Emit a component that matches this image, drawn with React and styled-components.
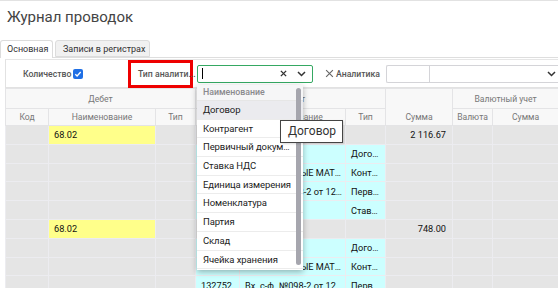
import React from 'react';
import styled, { createGlobalStyle } from 'styled-components';

const GlobalStyle = createGlobalStyle`
    body {
        margin: 0;
        background: #ffffff;
        font-family: Roboto, "Open Sans", sans-serif;
        color: #222;
    }
`

const Page = styled.div`
    position: relative;
    width: 558px;
    height: 288px;
    overflow: hidden;
    background: #fff;
`

const TitleBar = styled.div`
    height: 39px;
    border-top: 1px solid #e2e2e2;
    padding: 7px 7px 0;
    box-sizing: border-box;
    font-size: 15px;
    line-height: 18px;
    color: #444;
`

const TabStrip = styled.div`
    display: flex;
    align-items: flex-end;
    height: 18px;
    border-bottom: 1px solid #dedede;
`

const Tab = styled.div`
    width: ${p => p.$w}px;
    height: ${p => p.$active ? '18px' : '17px'};
    margin-bottom: ${p => p.$active ? '-1px' : '0'};
    margin-left: ${p => p.$active ? '0' : '2px'};
    padding: 0 ${p => p.$active ? '6px' : '7px'};
    box-sizing: border-box;
    border: 1px solid #dcdcdc;
    border-bottom: ${p => p.$active ? 'none' : '1px solid #dcdcdc'};
    border-radius: 3px 3px 0 0;
    background: ${p => p.$active ? '#fff' : '#f1f1f1'};
    font-size: 9px;
    line-height: 17px;
    color: #333;
    white-space: nowrap;
`

const Toolbar = styled.div`
    display: flex;
    align-items: center;
    height: 29px;
    margin: 1px 0 0 5px;
    box-sizing: border-box;
    border-top: 1px solid #e6e6e6;
    border-left: 1px solid #e2e2e2;
    border-bottom: 1px solid #e2e2e2;
`

const FieldLabel = styled.span`
    font-size: 8.7px;
    font-weight: 500;
    color: #555;
    white-space: nowrap;
`

const QtyLabel = styled(FieldLabel)`
    flex-shrink: 0;
    width: 48px;
    margin-left: 17px;
`

const CheckBox = styled.span`
    display: inline-flex;
    align-items: center;
    justify-content: center;
    flex-shrink: 0;
    width: 10px;
    height: 10px;
    margin-left: 2px;
    border-radius: 2px;
    background: #1f6fe5;
`

const Highlight = styled.div`
    display: flex;
    align-items: center;
    flex-shrink: 0;
    width: 65px;
    height: 28px;
    margin-left: 45px;
    padding-left: 7px;
    box-sizing: border-box;
    border: 3px solid #ee0000;
`

const SelectBox = styled.div`
    display: flex;
    align-items: center;
    flex-shrink: 0;
    width: 116px;
    height: 18px;
    margin-left: 4px;
    padding: 0 6px 0 4px;
    box-sizing: border-box;
    border: 1px solid #35a862;
    border-radius: 2px;
    background: #fff;
`

const Caret = styled.span`
    width: 1px;
    height: 11px;
    background: #000;
`

const Spacer = styled.span`
    flex: 1;
`

const ClearBtn = styled.div`
    display: flex;
    align-items: center;
    flex-shrink: 0;
    gap: 2px;
    margin-left: 12px;
    svg { flex-shrink: 0; }
`

const AnalyticsInput = styled.div`
    display: flex;
    align-items: center;
    flex: 1;
    height: 18px;
    margin-left: 6px;
    box-sizing: border-box;
    border: 1px solid #d4d4d8;
    border-right: none;
    border-radius: 2px 0 0 2px;
`

const InputPart = styled.div`
    width: 42px;
    height: 100%;
    border-right: 1px solid #d4d4d8;
`

const Grid = styled.table`
    margin-left: 5px;
    border-collapse: collapse;
    table-layout: fixed;
    width: 553px;
`

const HeadCell = styled.th`
    height: ${p => p.$h || 19}px;
    padding: 0 3px;
    border: 1px solid #e4e4e6;
    background: #f8f8f8;
    color: #777;
    font-size: 8.6px;
    font-weight: 400;
    text-align: center;
    vertical-align: ${p => p.$bottom ? 'bottom' : 'middle'};
    padding-bottom: ${p => p.$bottom ? '3px' : '0'};
    white-space: nowrap;
    overflow: hidden;
`

const bgFor = {
    gray: '#e5e5e5',
    yellow: '#ffff8a',
    cyan: '#ccffff',
}

const Cell = styled.td`
    height: 18.8px;
    padding: 0 ${p => p.$right ? '6px' : '3px'} 0 5px;
    box-sizing: border-box;
    border: 1px solid #ececf0;
    background: ${p => bgFor[p.$tone || 'gray']};
    color: #111;
    font-size: 9.2px;
    text-align: ${p => p.$right ? 'right' : 'left'};
    white-space: nowrap;
    overflow: hidden;
    text-overflow: ellipsis;
`

const Dropdown = styled.div`
    position: absolute;
    left: 197px;
    top: 85px;
    width: 106px;
    height: 185px;
    background: #fff;
    box-shadow: 0 2px 6px rgba(0, 0, 0, 0.3);
    overflow: hidden;
`

const DropHead = styled.div`
    height: 15px;
    padding-left: 6px;
    background: #f6f6f7;
    color: #8a8a8e;
    font-size: 8.8px;
    font-weight: 500;
    line-height: 15px;
    border-bottom: 1px solid #e6e6e6;
`

const DropItem = styled.div`
    height: 18.7px;
    padding: 0 10px 0 6px;
    box-sizing: border-box;
    border-bottom: 1px solid #ececec;
    background: ${p => p.$active ? '#ebebef' : '#fff'};
    font-size: 9.5px;
    letter-spacing: -0.1px;
    line-height: 18px;
    color: #222;
    white-space: nowrap;
    overflow: hidden;
    text-overflow: ellipsis;
`

const ScrollThumb = styled.div`
    position: absolute;
    right: 2px;
    top: 3px;
    width: 5px;
    height: 177px;
    border-radius: 3px;
    background: #a6a6ae;
`

const Tooltip = styled.div`
    position: absolute;
    left: 280px;
    top: 120px;
    width: 63px;
    height: 23px;
    box-sizing: border-box;
    padding-left: 7px;
    border: 1px solid #444;
    background: #fff;
    font-size: 12px;
    line-height: 21px;
    color: #333;
    box-shadow: 1px 1px 2px rgba(0, 0, 0, 0.15);
`

const Chevron = () => (
    <svg width="9" height="6" viewBox="0 0 9 6">
        <path d="M1 1l3.5 3.5L8 1" fill="none" stroke="#333" strokeWidth="1.5" />
    </svg>
)

const Cross = ({color = '#333', size = 7, w = 1.6}) => (
    <svg width={size} height={size} viewBox="0 0 8 8">
        <path d="M1 1l6 6M7 1l-6 6" fill="none" stroke={color} strokeWidth={w} />
    </svg>
)

const rows = [
    {dName: '68.02', sum: '2 116.67'},
    {cType: 'Договор'},
    {cName: 'ООО ТОРГОВЫЕ МАТЕРИАЛЫ', cType: 'Контрагент'},
    {cCode: '132752', cName: 'Вх. с-ф. №098-2 от 12.01.2023', cType: 'Первичный документ'},
    {cType: 'Ставка НДС'},
    {dName: '68.02', sum: '748.00'},
    {cType: 'Договор'},
    {cName: 'ООО ТОРГОВЫЕ МАТЕРИАЛЫ', cType: 'Контрагент'},
    {cCode: '132752', cName: 'Вх. с-ф. №098-2 от 12.01.2023', cType: 'Первичный документ'},
]

const items = ['Договор', 'Контрагент', 'Первичный документ', 'Ставка НДС', 'Единица измерения',
    'Номенклатура', 'Партия', 'Склад', 'Ячейка хранения']

const App = () => {
    return (<>
        <GlobalStyle />
        <Page>
            <TitleBar>Журнал проводок</TitleBar>
            <TabStrip>
                <Tab $active $w={53}>Основная</Tab>
                <Tab $w={95}>Записи в регистрах</Tab>
            </TabStrip>
            <Toolbar>
                <QtyLabel>Количество</QtyLabel>
                <CheckBox>
                    <svg width="8" height="8" viewBox="0 0 8 8">
                        <path d="M1.3 4.2l1.8 1.8 3.6-4" fill="none" stroke="#fff" strokeWidth="1.3" />
                    </svg>
                </CheckBox>
                <Highlight><FieldLabel>Тип аналити...</FieldLabel></Highlight>
                <SelectBox>
                    <Caret />
                    <Spacer />
                    <Cross size={7} />
                    <span style={{width: 10}} />
                    <Chevron />
                </SelectBox>
                <ClearBtn>
                    <Cross color="#666" size={9} w={1} />
                    <FieldLabel>Аналитика</FieldLabel>
                </ClearBtn>
                <AnalyticsInput>
                    <InputPart />
                    <Spacer />
                    <Chevron />
                    <span style={{width: 2}} />
                </AnalyticsInput>
            </Toolbar>
            <Grid>
                <colgroup>
                    <col style={{width: 43}} />
                    <col style={{width: 107}} />
                    <col style={{width: 40}} />
                    <col style={{width: 44}} />
                    <col style={{width: 106}} />
                    <col style={{width: 40}} />
                    <col style={{width: 67}} />
                    <col style={{width: 40}} />
                    <col style={{width: 66}} />
                </colgroup>
                <thead>
                    <tr>
                        <HeadCell colSpan={3}>Дебет</HeadCell>
                        <HeadCell colSpan={3}>Кредит</HeadCell>
                        <HeadCell rowSpan={2} $bottom>Сумма</HeadCell>
                        <HeadCell colSpan={2}>Валютный учет</HeadCell>
                    </tr>
                    <tr>
                        <HeadCell $h={16}>Код</HeadCell>
                        <HeadCell $h={16}>Наименование</HeadCell>
                        <HeadCell $h={16}>Тип</HeadCell>
                        <HeadCell $h={16}>Код</HeadCell>
                        <HeadCell $h={16}>Наименование</HeadCell>
                        <HeadCell $h={16}>Тип</HeadCell>
                        <HeadCell $h={16}>Валюта</HeadCell>
                        <HeadCell $h={16}>Сумма</HeadCell>
                    </tr>
                </thead>
                <tbody>
                    {rows.map((r, i) => {
                        const credit = r.cType ? 'cyan' : 'gray'
                        return (
                            <tr key={i}>
                                <Cell />
                                <Cell $tone={r.dName ? 'yellow' : 'gray'}>{r.dName}</Cell>
                                <Cell />
                                <Cell $tone={credit}>{r.cCode}</Cell>
                                <Cell $tone={credit}>{r.cName}</Cell>
                                <Cell $tone={credit}>{r.cType}</Cell>
                                <Cell $right>{r.sum}</Cell>
                                <Cell />
                                <Cell />
                            </tr>
                        )
                    })}
                </tbody>
            </Grid>
            <Dropdown>
                <DropHead>Наименование</DropHead>
                {items.map((it, i) => <DropItem key={it} $active={i === 0}>{it}</DropItem>)}
                <ScrollThumb />
            </Dropdown>
            <Tooltip>Договор</Tooltip>
        </Page>
    </>)
}

export default App
